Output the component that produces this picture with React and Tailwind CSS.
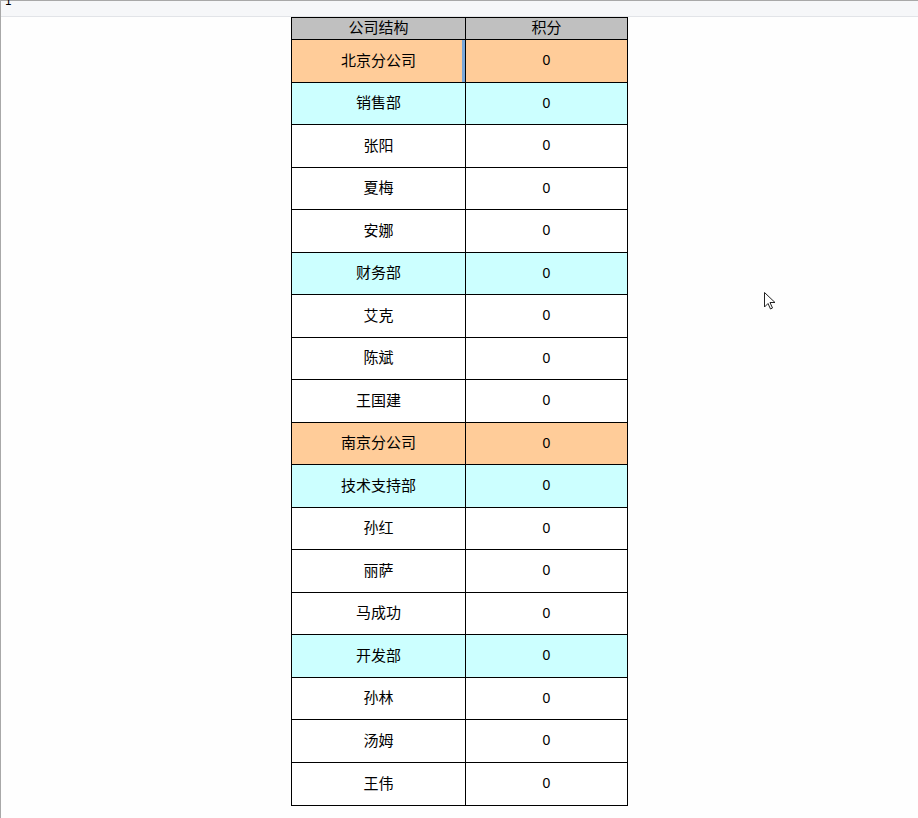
import React from 'react';

const rows = [
  { name: '北京分公司', type: 'company' },
  { name: '销售部', type: 'dept' },
  { name: '张阳' },
  { name: '夏梅' },
  { name: '安娜' },
  { name: '财务部', type: 'dept' },
  { name: '艾克' },
  { name: '陈斌' },
  { name: '王国建' },
  { name: '南京分公司', type: 'company' },
  { name: '技术支持部', type: 'dept' },
  { name: '孙红' },
  { name: '丽萨' },
  { name: '马成功' },
  { name: '开发部', type: 'dept' },
  { name: '孙林' },
  { name: '汤姆' },
  { name: '王伟' },
];

const rowBg = (type) => {
  if (type === 'company') return 'bg-[#ffcc99]';
  if (type === 'dept') return 'bg-[#ccffff]';
  return 'bg-white';
};

const Cursor = () => (
  <svg width="14" height="20" viewBox="0 0 14 20" className="absolute left-[763px] top-[292px]">
    <path d="M0.5 0.5 L0.5 15 L4 11.5 L6.5 17 L8.5 16 L6 10.5 L11 10.5 Z" fill="white" stroke="#222" strokeWidth="1" strokeLinejoin="round" />
  </svg>
);

export default function App() {
  return (
    <div className="relative w-[918px] h-[818px] bg-[#fefefe] border-l border-[#a8a8a8] overflow-hidden" style={{ fontFamily: '"Noto Sans CJK SC", "DejaVu Sans", sans-serif' }}>
      <div className="h-[17px] bg-[#f6f7f9] border-t border-[#a8a8a8] border-b border-b-[#e2e4e8] relative">
        <span className="absolute left-[4px] top-[-8px] text-[12px] leading-[14px] text-black">1</span>
      </div>

      <div className="ml-[290px] w-[337px] border border-black text-black">
        <div className="flex h-[22px] bg-[#c0c0c0] border-b border-black text-[15px] leading-none">
          <div className="w-[174px] border-r border-black flex items-center justify-center pb-[4px]">公司结构</div>
          <div className="flex-1 flex items-center justify-center pb-[4px]">积分</div>
        </div>
        {rows.map((r, i) => (
          <div
            key={i}
            className={`flex h-[42.5px] ${rowBg(r.type)} ${i < rows.length - 1 ? 'border-b border-black' : ''}`}
          >
            <div className="w-[174px] border-r border-black flex items-center justify-center text-[15px] leading-none pb-[3px] relative">
              {r.name}
              {i === 0 && <div className="absolute right-0 top-0 bottom-0 w-[3px] bg-[#7aa7d8]" />}
            </div>
            <div className="flex-1 flex items-center justify-center text-[14px] leading-none pb-[1px]" style={{ fontFamily: '"Liberation Sans", sans-serif' }}>0</div>
          </div>
        ))}
      </div>

      <Cursor />
    </div>
  );
}
